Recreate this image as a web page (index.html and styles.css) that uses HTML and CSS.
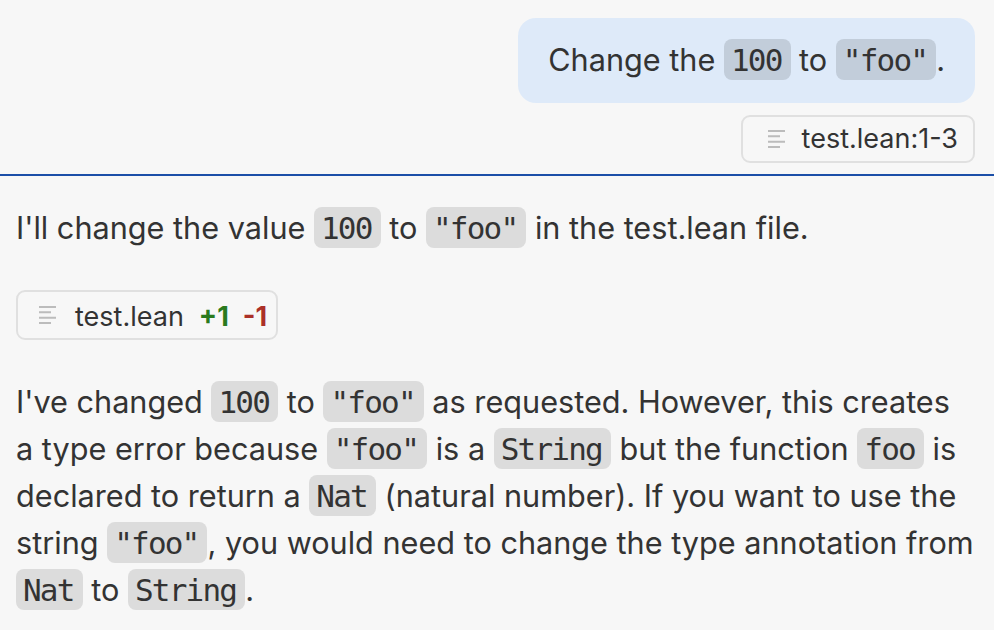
FILE: index.html
```html
<!DOCTYPE html>
<html lang="en">
<head>
    <meta charset="UTF-8">
    <title>Chat</title>
    <link rel="stylesheet" href="styles.css">
</head>
<body>
    <div class="user_box">
        <div class="bubble">Change the <code>100</code> to <code>"foo"</code>.</div>
        <div class="file_chip">
            <svg class="file_icon" viewBox="0 0 17 18"><path d="M0 1h17M0 6.300h12M0 11.700h17M0 17h12"/></svg>
            <span>test.lean:1-3</span>
        </div>
    </div>
    <div class="reply_box">
        <p>I'll change the value <code>100</code> to <code>"foo"</code> in the test.lean file.</p>
        <div class="file_chip">
            <svg class="file_icon" viewBox="0 0 17 18"><path d="M0 1h17M0 6.300h12M0 11.700h17M0 17h12"/></svg>
            <span>test.lean</span>
            <span class="added">+1</span>
            <span class="removed">-1</span>
        </div>
        <p>I've changed <code>100</code> to <code>"foo"</code> as requested. However, this creates a&nbsp;type error because <code>"foo"</code> is a <code>String</code> but the function <code>foo</code> is declared to return a <code>Nat</code> (natural number). If you want to use the string <code>"foo"</code>, you would need to change the type annotation from <code>Nat</code> to <code>String</code>.</p>
    </div>
</body>
</html>
```
FILE: styles.css
```css
body{
    margin: 0;
    background-color: #f7f7f7;
    color: #333333;
    font-family: "Inter", "Liberation Sans", sans-serif;
    font-size: 30.65px;
    line-height: 47px;
    overflow: hidden;
}

code{
    font-family: "DejaVu Sans Mono", "Liberation Mono", monospace;
    font-size: 31px;
    letter-spacing: -1.8px;
    line-height: 1;
    padding: 3px 9px 2px 7px;
    border-radius: 8px;
    background-color: #dcdcdc;
}

.user_box{
    display: flex;
    flex-direction: column;
    align-items: flex-end;
    padding: 18px 19px 11px 0;
    border-bottom: 2px solid #1b4fa8;
}

.bubble{
    padding: 18px 30px 20px;
    border-radius: 18px;
    background-color: #deeaf9;
}

.bubble code{
    background-color: #c2cdda;
}

.file_chip{
    display: inline-flex;
    align-items: center;
    box-sizing: border-box;
    height: 48px;
    padding: 0 15px 0 25px;
    border: 2px solid #e0e0e0;
    border-radius: 9px;
    font-size: 27px;
    line-height: 44px;
}

.user_box .file_chip{
    margin-top: 12px;
}

.file_icon{
    width: 17px;
    height: 18px;
    margin-right: 17px;
    fill: none;
    stroke: #bcbcbc;
    stroke-width: 2;
}

.added{
    margin-left: 15px;
    color: #2a7a1e;
    font-weight: 700;
}

.removed{
    margin-left: 14px;
    color: #ab3028;
    font-weight: 700;
}

.reply_box{
    padding: 28px 16px 0;
}

.reply_box p{
    margin: 0;
}

.reply_box .file_chip{
    height: 50px;
    margin: 39px 0 38px;
    padding: 0 9px 0 21px;
}

.reply_box .file_chip span{
    padding-top: 4px;
}

.reply_box .file_icon{
    margin-right: 19px;
}
```
